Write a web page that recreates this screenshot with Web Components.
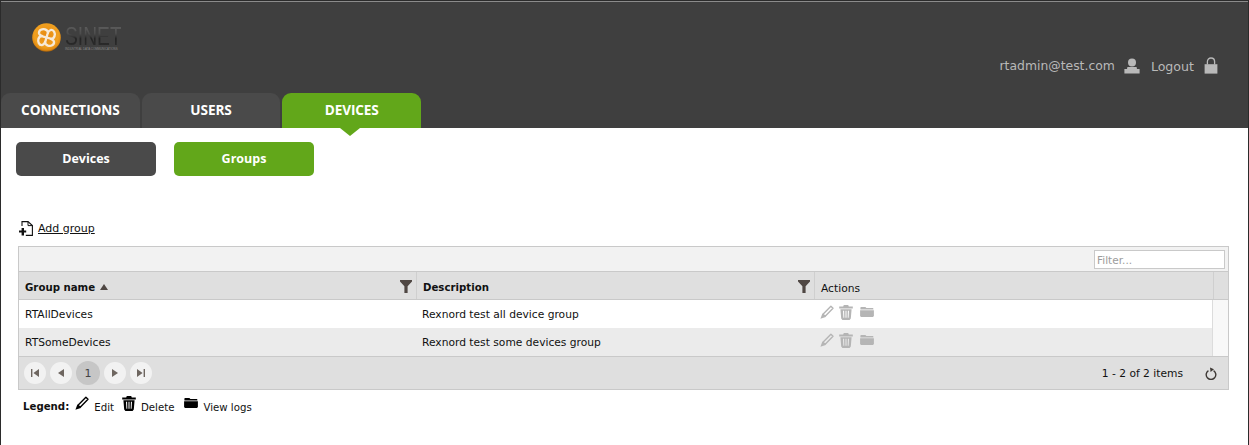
<!DOCTYPE html>
<html>
<head>
<meta charset="utf-8">
<title>Devices</title>
<style>
  html, body { margin: 0; padding: 0; background: #fff; }
  body { font-family: "DejaVu Sans", sans-serif; font-size: 10.7px; color: #111; }
</style>
</head>
<body>
<sn-app>
  <sn-header slot="header" user="rtadmin@test.com">
    <sn-tab>CONNECTIONS</sn-tab>
    <sn-tab>USERS</sn-tab>
    <sn-tab active>DEVICES</sn-tab>
  </sn-header>
  <sn-subnav>
    <sn-pill>Devices</sn-pill>
    <sn-pill active>Groups</sn-pill>
  </sn-subnav>
  <sn-add-link>Add group</sn-add-link>
  <sn-grid>
    <sn-grid-row name="RTAllDevices" description="Rexnord test all device group"></sn-grid-row>
    <sn-grid-row alt name="RTSomeDevices" description="Rexnord test some devices group"></sn-grid-row>
  </sn-grid>
  <sn-legend></sn-legend>
</sn-app>

<script>
const icons = {
  edit: `<svg viewBox="0 0 14 14" width="14" height="14"><path fill="none" stroke="currentColor" stroke-width="1.4" stroke-linejoin="round" d="M10.9 1.2 13 3.3 5.2 11.3 3 9.2Z"/><path fill="currentColor" d="M2.4 8.6 5.8 11.9 .4 13.8Z"/></svg>`,
  trash: `<svg viewBox="0 0 14 15" width="14" height="15"><path fill="currentColor" fill-rule="evenodd" d="M4.8 0H9.2L9.8 1.5H13.8V3.4H.2V1.5H4.2ZM1.4 4.2H12.6L11.8 13.6 10.6 15H3.4L2.2 13.6ZM4 5.8 4.4 12.8H5.3L5.1 5.8ZM6.5 5.8V12.8H7.5V5.8ZM8.9 5.8 8.7 12.8H9.6L10 5.8Z"/></svg>`,
  folder: `<svg viewBox="0 0 14 10" width="14" height="10"><path fill="currentColor" d="M1 0H5.4L6.4 1H12.8L13.4 1.6V2.4H.4V.6ZM.1 3.2H13.9V9L13 10H1L.1 9Z"/></svg>`,
  funnel: `<svg viewBox="0 0 12 13" width="12" height="13"><path fill="#4f4743" d="M0 0H12V1.6L7.6 6.2V13H4.4V6.2L0 1.6Z"/></svg>`,
  user: `<svg viewBox="0 0 16 16" width="16" height="16"><circle cx="8" cy="4.4" r="4" fill="currentColor"/><path fill="currentColor" d="M3.4 9H12.6L13 11H15.6V15.6H.4V11H3Z"/></svg>`,
  lock: `<svg viewBox="0 0 14 17" width="14" height="17"><path fill="none" stroke="currentColor" stroke-width="1.3" d="M3.4 7.4V4.6C3.4 2.4 5 1 7 1S10.6 2.4 10.6 4.6V7.4"/><rect x=".6" y="7.2" width="12.8" height="9.4" fill="currentColor"/></svg>`
}

customElements.define('sn-app', class extends HTMLElement {
  constructor() {
    super()
    this.attachShadow({mode: 'open'})
    this.shadowRoot.innerHTML = `
    <style>
      :host {
        display: block;
        height: 445px;
        box-sizing: border-box;
        border-left: 1px solid #2b2b2b;
        border-right: 1px solid #2b2b2b;
        overflow: hidden;
      }
    </style>
    <slot name="header"></slot>
    <slot></slot>`
  }
})

customElements.define('sn-logo', class extends HTMLElement {
  constructor() {
    super()
    this.attachShadow({mode: 'open'})
    this.shadowRoot.innerHTML = `
    <style>
      :host { display: flex; align-items: flex-start; gap: 3px; }
      svg { display: block; flex: none; }
      .brand { display: flex; flex-direction: column; margin-top: 2px; width: 56px; }
      .name {
        font: 26px/22px "Liberation Sans", sans-serif;
        transform: scaleX(.74);
        transform-origin: left top;
        width: 76px;
        background: linear-gradient(#5e5e5e, #4c4c4c 40%, #242424 62%, #2c2c2c);
        -webkit-background-clip: text;
        background-clip: text;
        color: transparent;
      }
      .tag {
        font: 2.9px/4px "Liberation Sans", sans-serif;
        color: #8a8a8a;
        white-space: nowrap;
      }
    </style>
    <svg width="30" height="31" viewBox="0 0 30 31">
      <defs>
        <radialGradient id="orb" cx="50%" cy="42%" r="58%">
          <stop offset="0" stop-color="#e88a12"/>
          <stop offset=".72" stop-color="#f0a020"/>
          <stop offset=".9" stop-color="#e08a12"/>
          <stop offset="1" stop-color="#9a5a0c"/>
        </radialGradient>
        <path id="arm" fill="none" stroke="#f7ead8" stroke-width="2.3" stroke-linecap="round" d="M14.5 14.5C11.5 13.4 7.8 13.6 7 10.2 6.6 7 10.4 5.6 13 6.4 15 7.1 16 8.4 16 10"/>
      </defs>
      <circle cx="14.5" cy="14.5" r="14.3" fill="url(#orb)"/>
      <use href="#arm"/>
      <use href="#arm" transform="rotate(90 14.5 14.5)"/>
      <use href="#arm" transform="rotate(180 14.5 14.5)"/>
      <use href="#arm" transform="rotate(270 14.5 14.5)"/>
    </svg>
    <div class="brand">
      <div class="name">SINET</div>
      <div class="tag">INDUSTRIAL DATA COMMUNICATIONS</div>
    </div>`
  }
})

customElements.define('sn-header', class extends HTMLElement {
  constructor() {
    super()
    this.attachShadow({mode: 'open'})
    this.shadowRoot.innerHTML = `
    <style>
      :host {
        display: flex;
        flex-direction: column;
        height: 128px;
        box-sizing: border-box;
        background: #3f3f3f;
        border-top: 1px solid #2b2b2b;
        box-shadow: inset 0 1px 0 #8b8b8b;
      }
      .top {
        flex: 1;
        display: flex;
        justify-content: space-between;
        align-items: flex-start;
        padding: 22px 30px 0 31px;
      }
      .user {
        display: flex;
        align-items: center;
        color: #b9b9b9;
        font-size: 12.4px;
        margin-top: 34px;
      }
      .user svg { display: block; }
      .mail { margin-right: 9px; }
      .logout { margin: 0 10px 0 11px; font-size: 12.6px; position: relative; top: 1px; }
      nav { display: flex; gap: 2px; height: 35px; }
    </style>
    <div class="top">
      <sn-logo></sn-logo>
      <div class="user">
        <span class="mail">${this.getAttribute('user')}</span>
        ${icons.user}
        <span class="logout">Logout</span>
        ${icons.lock}
      </div>
    </div>
    <nav><slot></slot></nav>`
  }
})

customElements.define('sn-tab', class extends HTMLElement {
  constructor() {
    super()
    this.attachShadow({mode: 'open'})
    this.shadowRoot.innerHTML = `
    <style>
      :host {
        display: flex;
        align-items: center;
        justify-content: center;
        position: relative;
        width: 138.7px;
        height: 35px;
        padding-bottom: 3px;
        box-sizing: border-box;
        border-radius: 9px 9px 0 0;
        background: #4a4a4a;
        color: #fff;
        font: bold 13.6px "Open Sans", sans-serif;
        letter-spacing: -.1px;
      }
      :host([active]) { background: #62a71a; }
      :host([active])::after {
        content: "";
        position: absolute;
        left: 58px;
        top: 100%;
        border: 10px solid transparent;
        border-top: 8px solid #62a71a;
        border-bottom: 0;
      }
    </style>
    <slot></slot>`
  }
})

customElements.define('sn-subnav', class extends HTMLElement {
  constructor() {
    super()
    this.attachShadow({mode: 'open'})
    this.shadowRoot.innerHTML = `
    <style>
      :host { display: flex; gap: 18px; padding: 14px 0 0 15px; }
    </style>
    <slot></slot>`
  }
})

customElements.define('sn-pill', class extends HTMLElement {
  constructor() {
    super()
    this.attachShadow({mode: 'open'})
    this.shadowRoot.innerHTML = `
    <style>
      :host {
        display: flex;
        align-items: center;
        justify-content: center;
        width: 140px;
        height: 34px;
        padding-bottom: 1px;
        box-sizing: border-box;
        border-radius: 5px;
        background: #4a4a4a;
        color: #fff;
        font: bold 12.5px "Open Sans", sans-serif;
      }
      :host([active]) { background: #62a71a; }
    </style>
    <slot></slot>`
  }
})

customElements.define('sn-add-link', class extends HTMLElement {
  constructor() {
    super()
    this.attachShadow({mode: 'open'})
    this.shadowRoot.innerHTML = `
    <style>
      :host {
        display: flex;
        align-items: center;
        gap: 5px;
        padding: 44px 0 0 18px;
        height: 16px;
        color: #111;
        font-size: 11px;
      }
      svg { display: block; }
      a { color: inherit; text-decoration: underline; }
    </style>
    <svg viewBox="0 0 14 15" width="14" height="15">
      <path fill="none" stroke="#111" stroke-width="1.1" d="M3 5V.6H9L13.4 4.6V14.4H6.8"/>
      <path fill="none" stroke="#111" stroke-width="1" d="M9 .6V4.6H13.4"/>
      <path fill="#111" d="M2.6 7H5V9.4H7.2V11.6H5V14.4H2.6V11.6H0V9.4H2.6Z"/>
    </svg>
    <a href="#"><slot></slot></a>`
  }
})

customElements.define('sn-grid', class extends HTMLElement {
  constructor() {
    super()
    this.attachShadow({mode: 'open'})
    this.shadowRoot.innerHTML = `
    <style>
      :host {
        display: block;
        box-sizing: border-box;
        width: 1211px;
        margin: 10px 0 0 17px;
        border: 1px solid #c9c9c9;
      }
      .toolbar {
        display: flex;
        justify-content: flex-end;
        align-items: center;
        height: 24px;
        padding-right: 3px;
        background: #f2f2f2;
        border-bottom: 1px solid #c9c9c9;
      }
      .filter {
        width: 131px;
        height: 19px;
        box-sizing: border-box;
        padding: 0 2px;
        line-height: 18px;
        background: #fff;
        border: 1px solid #c9c9c9;
        color: #9c9c9c;
        font-size: 10.5px;
      }
      .head {
        display: grid;
        grid-template-columns: 398px 398px 399px 1fr;
        height: 27px;
        background: #dfdfdf;
        border-bottom: 1px solid #c9c9c9;
        font-weight: bold;
        font-size: 10.2px;
      }
      .head > div {
        display: flex;
        align-items: center;
        position: relative;
        padding: 3px 0 0 6px;
        border-right: 1px solid #cfcfcf;
      }
      .head > div:last-child { border-right: 0; }
      .head .plain {
        font-weight: normal;
        font-size: 10.7px;
        padding-top: 6px;
        padding-left: 6px;
      }
      .sort {
        margin-left: 5px;
        border: 4px solid transparent;
        border-bottom: 6px solid #4f4743;
        border-top: 0;
      }
      .head svg { position: absolute; right: 4px; top: 8px; }
      .body { display: flex; }
      .rows { width: 1194px; }
      .scroll {
        width: 15px;
        background: #f8f8f8;
        border-left: 1px solid #dcdcdc;
      }
      .foot {
        display: flex;
        align-items: center;
        justify-content: space-between;
        height: 32px;
        padding: 0 11px 0 5px;
        background: #dfdfdf;
        border-top: 1px solid #c9c9c9;
      }
      .pager { display: flex; align-items: center; gap: 4px; }
      .pager span {
        display: flex;
        align-items: center;
        justify-content: center;
        width: 22px;
        height: 22px;
        border-radius: 50%;
        background: #f2f2f2;
        color: #6e6660;
      }
      .pager .current {
        width: 24px;
        height: 24px;
        background: #c6c6c6;
        color: #444;
        font-size: 11px;
      }
      .pager svg { display: block; }
      .info { display: flex; align-items: center; gap: 22px; }
      .info svg { display: block; }
    </style>
    <div class="toolbar"><div class="filter">Filter...</div></div>
    <div class="head">
      <div>Group name<i class="sort"></i>${icons.funnel}</div>
      <div>Description${icons.funnel}</div>
      <div class="plain">Actions</div>
      <div></div>
    </div>
    <div class="body">
      <div class="rows"><slot></slot></div>
      <div class="scroll"></div>
    </div>
    <div class="foot">
      <div class="pager">
        <span><svg width="8" height="8" viewBox="0 0 8 8"><path fill="currentColor" d="M0 0H1.4V8H0ZM8 0V8L2.4 4Z"/></svg></span>
        <span><svg width="6" height="8" viewBox="0 0 6 8"><path fill="currentColor" d="M6 0V8L0 4Z"/></svg></span>
        <span class="current">1</span>
        <span><svg width="6" height="8" viewBox="0 0 6 8"><path fill="currentColor" d="M0 0V8L6 4Z"/></svg></span>
        <span><svg width="8" height="8" viewBox="0 0 8 8"><path fill="currentColor" d="M0 0V8L5.6 4ZM6.6 0H8V8H6.6Z"/></svg></span>
      </div>
      <div class="info">
        <span>1 - 2 of 2 items</span>
        <svg width="12" height="13" viewBox="0 0 12 13"><path fill="none" stroke="#3d3834" stroke-width="1.4" d="M3.4 3.6A4.8 4.8 0 1 0 8.6 3.6"/><path fill="#3d3834" d="M5 .4 9 2.2 5.6 5Z"/></svg>
      </div>
    </div>`
  }
})

customElements.define('sn-grid-row', class extends HTMLElement {
  constructor() {
    super()
    this.attachShadow({mode: 'open'})
    this.shadowRoot.innerHTML = `
    <style>
      :host {
        display: grid;
        grid-template-columns: 397px 398px 1fr;
        height: 28px;
        background: #fff;
        color: #111;
      }
      :host([alt]) { background: #ebebeb; }
      div { display: flex; align-items: center; padding-left: 6px; }
      .actions {
        gap: 5px;
        align-items: flex-start;
        padding: 5px 0 0 6px;
        color: #b5b5b5;
      }
      svg { display: block; }
      svg:last-child { margin: 2px 0 0 2px; }
    </style>
    <div>${this.getAttribute('name')}</div>
    <div>${this.getAttribute('description')}</div>
    <div class="actions">${icons.edit}${icons.trash}${icons.folder}</div>`
  }
})

customElements.define('sn-legend', class extends HTMLElement {
  constructor() {
    super()
    this.attachShadow({mode: 'open'})
    this.shadowRoot.innerHTML = `
    <style>
      :host {
        display: flex;
        align-items: flex-start;
        padding: 6px 0 0 22px;
        color: #111;
        font-size: 10.2px;
        line-height: 16px;
      }
      b { margin-right: 6px; padding-top: 3px; }
      span { margin: 0 8px 0 5px; padding-top: 4px; }
      svg { display: block; color: #000; }
      svg:nth-of-type(3) { margin: 2px 0 0 2px; }
    </style>
    <b>Legend:</b>
    ${icons.edit}<span>Edit</span>
    ${icons.trash}<span>Delete</span>
    ${icons.folder}<span>View logs</span>`
  }
})
</script>
</body>
</html>
